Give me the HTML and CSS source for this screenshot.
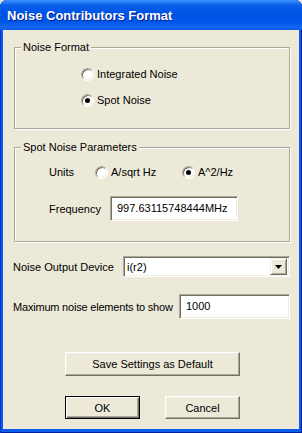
FILE: index.html
```html
<!DOCTYPE html>
<html lang="en">
<head>
    <meta charset="utf-8">
    <title>Noise Contributors Format</title>
    <link rel="stylesheet" href="styles.css">
</head>
<body>
<div class="window">
    <div class="titlebar"><span class="title">Noise Contributors Format</span></div>
    <div class="client">
        <div class="group group-format">
            <span class="legend">Noise Format</span>
            <div class="radio-row"><span class="radio"></span>Integrated Noise</div>
            <div class="radio-row"><span class="radio checked"></span>Spot Noise</div>
        </div>

        <div class="group group-spot">
            <span class="legend">Spot Noise Parameters</span>
            <div class="units-row">
                <span class="units-label">Units</span>
                <span class="radio-item first"><span class="radio"></span>A/sqrt Hz</span>
                <span class="radio-item"><span class="radio checked"></span>A^2/Hz</span>
            </div>
            <div class="freq-row">
                <span class="freq-label">Frequency</span>
                <div class="textbox freq-box">997.63115748444MHz</div>
            </div>
        </div>

        <div class="field-row device-row">
            <span>Noise Output Device</span>
            <div class="combo">
                <span class="combo-text">i(r2)</span>
                <span class="combo-btn">
                    <svg width="7" height="4" viewBox="0 0 7 4"><path d="M0 0h7L3.5 4z" fill="#000"/></svg>
                </span>
            </div>
        </div>

        <div class="field-row max-row">
            <span>Maximum noise elements to show</span>
            <div class="textbox max-box">1000</div>
        </div>

        <div class="save-row">
            <button class="btn save-btn">Save Settings as Default</button>
        </div>

        <div class="action-row">
            <button class="btn btn-default">OK</button>
            <button class="btn">Cancel</button>
        </div>
    </div>
</div>
</body>
</html>
```

FILE: styles.css
```css
* {
    box-sizing: border-box;
}

body {
    margin: 0;
    background: #e4e4e4;
    font-family: "Liberation Sans", Arial, sans-serif;
    font-size: 11px;
    color: #000;
}

.window {
    width: 302px;
    height: 433px;
    display: flex;
    flex-direction: column;
    background: #0a5de8;
    border-radius: 7px 7px 0 0;
    box-shadow: inset 1px 0 #0831d9, inset -1px 0 #001ea0, inset 0 -1px #001ea0;
    overflow: hidden;
}

/* title bar */
.titlebar {
    height: 30px;
    flex: none;
    padding: 8px 0 0 7px;
    background: linear-gradient(to bottom, #3e92ff 0, #2b80fb 2px, #0a60ea 5px, #0055e5 12px, #0056e8 22px, #1567f4 27px, #0a5be8 30px);
    border-radius: 7px 7px 0 0;
}

.title {
    color: #fff;
    font-weight: bold;
    font-size: 13px;
    line-height: 15px;
    text-shadow: 1px 1px 0 #0a1e8c;
}

/* dialog body */
.client {
    flex: 1;
    margin: 0 3px 4px 3px;
    background: #ece9d8;
    padding-top: 17px;
}

.group {
    position: relative;
    width: 276px;
    margin-left: 11px;
    border: 1px solid #aca899;
    box-shadow: 1px 1px 0 #fff, inset 1px 1px 0 #fff;
}

.legend {
    position: absolute;
    top: -8px;
    left: 6px;
    padding: 0 2px;
    line-height: 14px;
    background: #ece9d8;
}

.group-format {
    height: 82px;
    padding: 18px 0 0 66px;
}

.radio-row {
    display: flex;
    align-items: center;
    height: 16px;
    margin-bottom: 10px;
}

.radio {
    position: relative;
    width: 13px;
    height: 13px;
    flex: none;
    margin-right: 3px;
    border-radius: 50%;
    background: #fff;
    border: 1px solid;
    border-color: #aca899 #fff #fff #aca899;
    box-shadow: inset 1px 1px 0 #716f64, inset -1px -1px 0 #f1efe2;
}

.radio.checked::after {
    content: "";
    position: absolute;
    left: 3px;
    top: 3px;
    width: 5px;
    height: 5px;
    border-radius: 50%;
    background: #000;
}

.group-spot {
    height: 95px;
    margin-top: 18px;
    padding: 16px 0 0 34px;
}

.units-row {
    display: flex;
    align-items: center;
    height: 16px;
}

.units-label {
    width: 46px;
}

.radio-item {
    display: flex;
    align-items: center;
}

.radio-item.first {
    width: 87px;
}

.freq-row {
    display: flex;
    align-items: center;
    margin-top: 16px;
}

.freq-label {
    width: 61px;
}

.textbox {
    height: 25px;
    padding: 4px 0 0 6px;
    background: #fff;
    border: 1px solid;
    border-color: #aca899 #fff #fff #aca899;
    box-shadow: inset 1px 1px 0 #716f64, inset -1px -1px 0 #f1efe2;
    line-height: 14px;
}

.freq-box {
    width: 128px;
}

/* rows below groups */
.field-row {
    display: flex;
    align-items: center;
    padding-left: 10px;
}

.device-row {
    margin-top: 14px;
}

.device-row > span {
    width: 110px;
}

.combo {
    display: flex;
    align-items: center;
    width: 167px;
    height: 21px;
    padding: 2px;
    background: #fff;
    border: 1px solid;
    border-color: #aca899 #fff #fff #aca899;
    box-shadow: inset 1px 1px 0 #716f64, inset -1px -1px 0 #f1efe2;
}

.combo-text {
    flex: 1;
    padding-left: 1px;
}

.combo-btn {
    width: 17px;
    height: 17px;
    display: flex;
    align-items: center;
    justify-content: center;
    background: #ece9d8;
    border: 1px solid;
    border-color: #f1efe2 #716f64 #716f64 #f1efe2;
    box-shadow: inset 1px 1px 0 #fff, inset -1px -1px 0 #aca899;
}

.max-row {
    margin-top: 17px;
}

.max-row > span {
    width: 166px;
    letter-spacing: -0.2px;
}

.max-box {
    width: 111px;
}

/* buttons */
.btn {
    height: 23px;
    padding: 0;
    font-family: inherit;
    font-size: 11px;
    color: #000;
    background: #ece9d8;
    border: 1px solid;
    border-color: #fff #716f64 #716f64 #fff;
    box-shadow: inset -1px -1px 0 #aca899, inset 1px 1px 0 #f1efe2;
}

.save-row {
    margin: 33px 0 0 62px;
}

.save-btn {
    width: 175px;
    height: 24px;
}

.action-row {
    display: flex;
    gap: 25px;
    margin: 20px 0 0 62px;
}

.action-row .btn {
    width: 75px;
}

.btn-default {
    border: 1px solid #000;
    box-shadow: inset 1px 1px 0 #fff, inset -1px -1px 0 #716f64, inset -2px -2px 0 #aca899;
}
```
